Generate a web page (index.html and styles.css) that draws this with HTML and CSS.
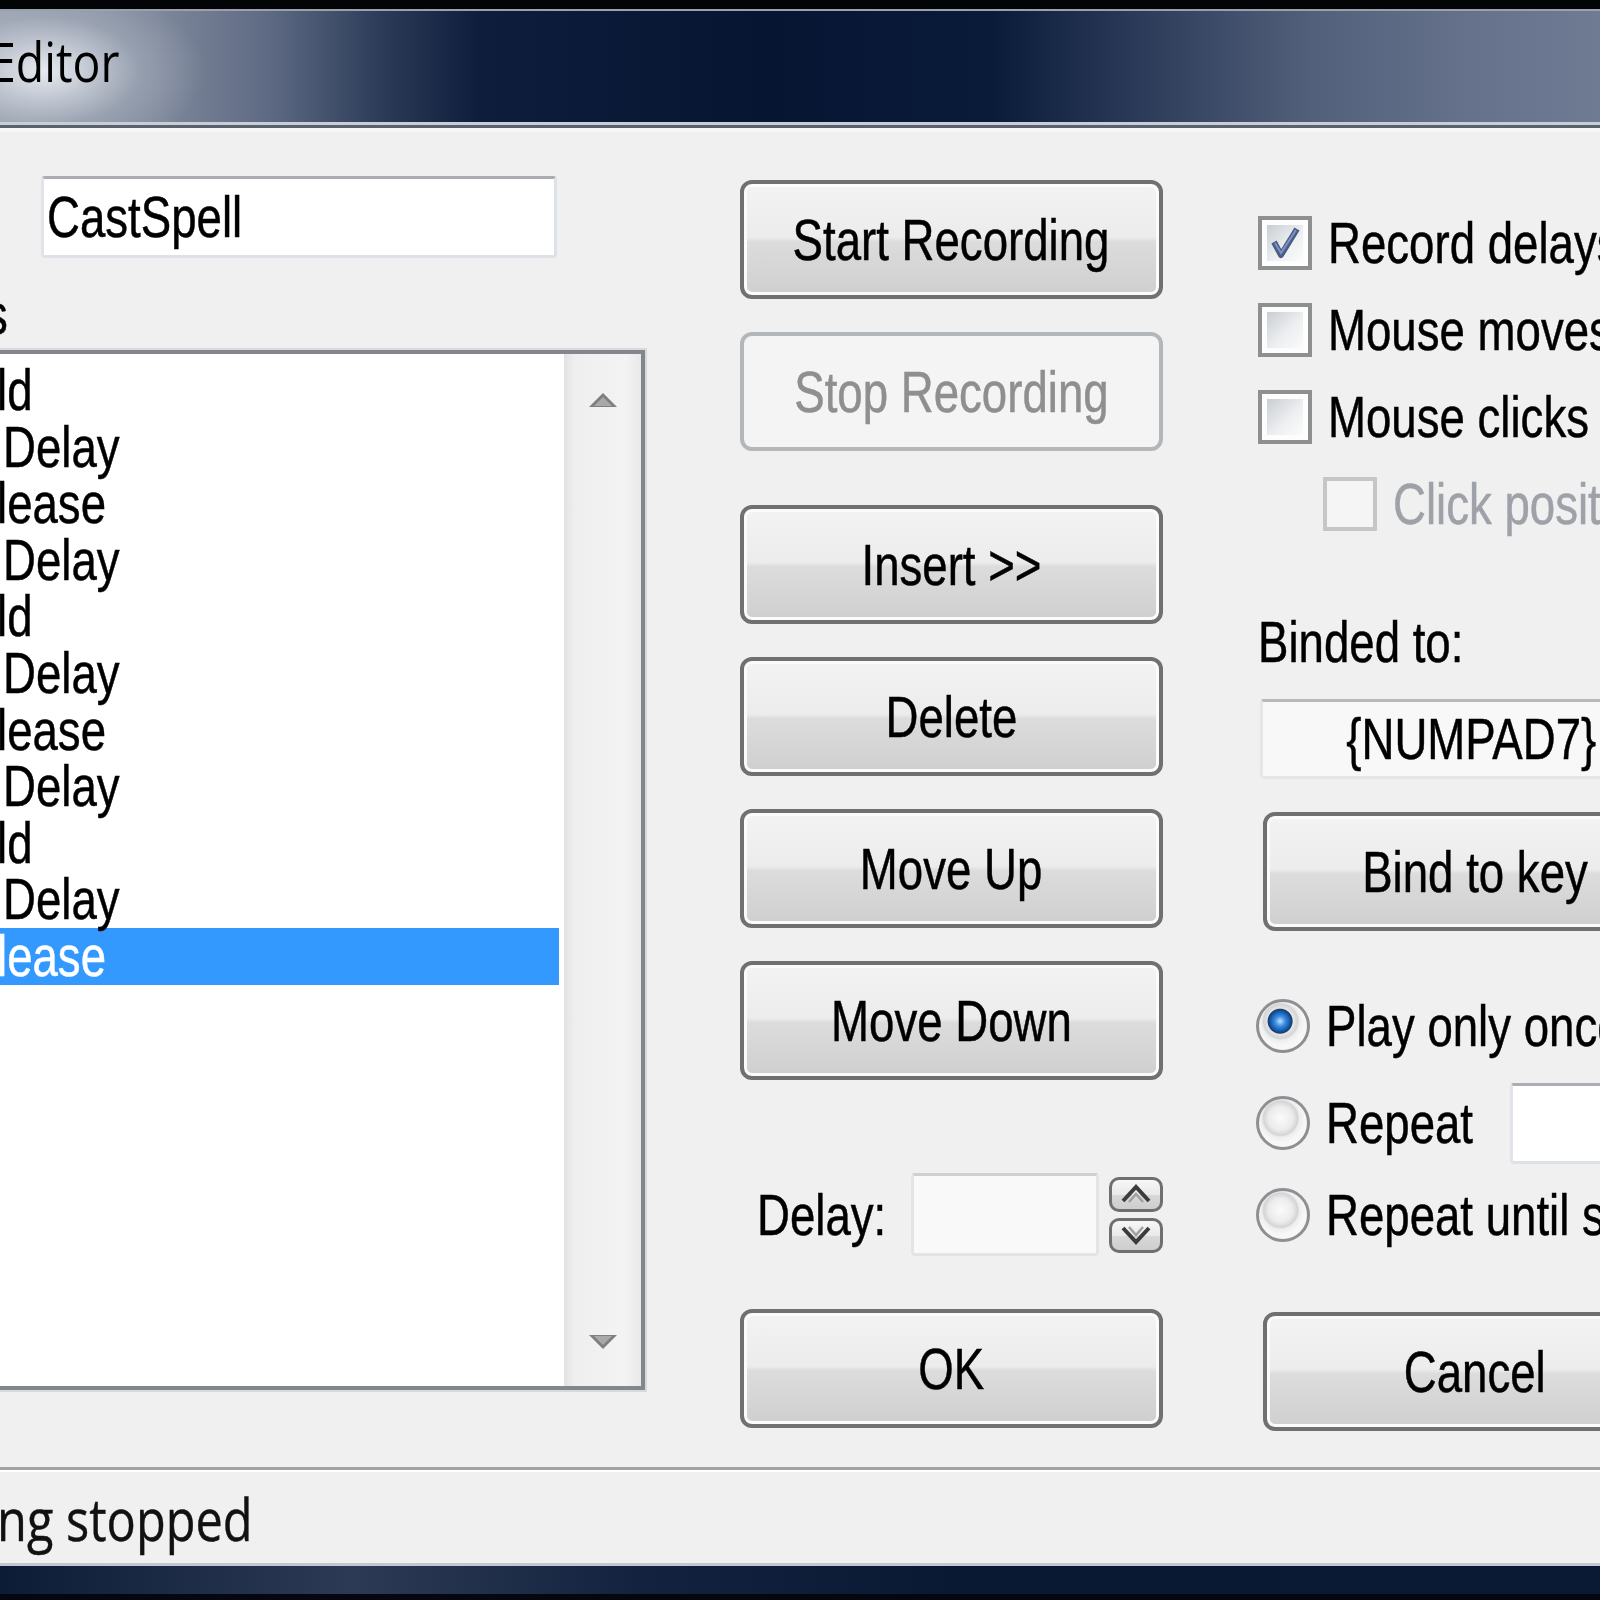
FILE: index.html
```html
<!DOCTYPE html>
<html lang="en">
<head>
    <meta charset="UTF-8">
    <title>Macro Editor</title>
    <link rel="stylesheet" href="styles.css">
</head>
<body>
<div class="window">
    <div class="titlebar"><span class="title">Editor</span></div>

    <div class="client">
        <div class="panes">
            <!-- left: name + steps list -->
            <div class="col-list">
                <div class="edit name-edit"><span class="txt">CastSpell</span></div>
                <div class="list-label"><span class="txt">s</span></div>
                <div class="listbox">
                    <div class="items">
                        <div class="item"><span class="txt cut">ld</span></div>
                        <div class="item"><span class="txt">Delay</span></div>
                        <div class="item"><span class="txt cut">lease</span></div>
                        <div class="item"><span class="txt">Delay</span></div>
                        <div class="item"><span class="txt cut">ld</span></div>
                        <div class="item"><span class="txt">Delay</span></div>
                        <div class="item"><span class="txt cut">lease</span></div>
                        <div class="item"><span class="txt">Delay</span></div>
                        <div class="item"><span class="txt cut">ld</span></div>
                        <div class="item"><span class="txt">Delay</span></div>
                        <div class="item selected"><span class="txt cut">lease</span></div>
                    </div>
                    <div class="scrollbar">
                        <svg width="30" height="16" viewBox="0 0 30 16"><polygon points="15,1 29,15 1,15" fill="#7f7f7f"/><polygon points="15,5 24,14 6,14" fill="#a9a9a9"/></svg>
                        <svg width="30" height="16" viewBox="0 0 30 16"><polygon points="1,1 29,1 15,15" fill="#7f7f7f"/><polygon points="6,2 24,2 15,11" fill="#a9a9a9"/></svg>
                    </div>
                </div>
            </div>

            <!-- middle: command buttons -->
            <div class="col-buttons">
                <div class="btn"><span class="txt">Start Recording</span></div>
                <div class="btn disabled"><span class="txt">Stop Recording</span></div>
                <div class="btn gap-lg"><span class="txt">Insert &gt;&gt;</span></div>
                <div class="btn"><span class="txt">Delete</span></div>
                <div class="btn"><span class="txt">Move Up</span></div>
                <div class="btn"><span class="txt">Move Down</span></div>

                <div class="delay-row">
                    <div class="delay-label"><span class="txt">Delay:</span></div>
                    <div class="edit delay-edit"></div>
                    <div class="spinner">
                        <div class="spin">
                            <svg width="38" height="20" viewBox="0 0 38 20"><polyline points="6,17 19,3 32,17" fill="none" stroke="#3c3c3c" stroke-width="4"/><polyline points="12,18 19,10 26,18" fill="none" stroke="#a0a0a0" stroke-width="2.5"/></svg>
                        </div>
                        <div class="spin">
                            <svg width="38" height="20" viewBox="0 0 38 20"><polyline points="6,3 19,17 32,3" fill="none" stroke="#3c3c3c" stroke-width="4"/><polyline points="12,2 19,10 26,2" fill="none" stroke="#a0a0a0" stroke-width="2.5"/></svg>
                        </div>
                    </div>
                </div>

                <div class="btn ok-btn"><span class="txt">OK</span></div>
            </div>

            <!-- right: options -->
            <div class="col-options">
                <div class="opt">
                    <div class="check checked">
                        <svg width="36" height="36" viewBox="0 0 36 36"><polyline points="7,17 14,30 30,4" fill="none" stroke="#4a5d86" stroke-width="6" stroke-linejoin="round"/><polyline points="8,18 14,28 29,5" fill="none" stroke="#7f93c4" stroke-width="2"/></svg>
                    </div>
                    <span class="txt">Record delays</span>
                </div>
                <div class="opt">
                    <div class="check"></div>
                    <span class="txt">Mouse moves</span>
                </div>
                <div class="opt">
                    <div class="check"></div>
                    <span class="txt">Mouse clicks</span>
                </div>
                <div class="opt sub disabled">
                    <div class="check"></div>
                    <span class="txt">Click position</span>
                </div>

                <div class="bind-label"><span class="txt">Binded to:</span></div>
                <div class="edit readonly key-edit"><span class="txt">{NUMPAD7}</span></div>
                <div class="btn bind-btn"><span class="txt">Bind to key</span></div>

                <div class="opt radio-row first">
                    <div class="radio on"></div>
                    <span class="txt">Play only once</span>
                </div>
                <div class="opt radio-row second">
                    <div class="radio"></div>
                    <span class="txt repeat-label">Repeat</span>
                    <div class="edit repeat-edit"></div>
                </div>
                <div class="opt radio-row third">
                    <div class="radio"></div>
                    <span class="txt">Repeat until stopped</span>
                </div>

                <div class="btn cancel-btn"><span class="txt">Cancel</span></div>
            </div>
        </div>

        <div class="statusbar"><span class="status-text">ng stopped</span></div>
    </div>

    <div class="frame-bottom"></div>
</div>
</body>
</html>
```

FILE: styles.css
```css
* {
    box-sizing: border-box;
}

body {
    margin: 0;
    background: #f0f0f0;
    overflow: hidden;
    font-family: "Liberation Sans", Arial, sans-serif;
    font-size: 57px;
    color: #000;
}

.window {
    width: 1600px;
    height: 1600px;
    display: flex;
    flex-direction: column;
    overflow: hidden;
}

/* caption bar */
.titlebar {
    flex: none;
    height: 132px;
    padding-top: 20px;
    border-top: 9px solid #030405;
    border-bottom: 4px solid #f6f6f6;
    background:
        radial-gradient(ellipse 160px 90px at 45px 62px, rgba(235, 238, 243, 0.95), rgba(170, 178, 192, 0.5) 60%, rgba(0, 0, 0, 0) 100%),
        linear-gradient(90deg, #9aa2b0 0, #7d879a 10%, #5d6983 17%, #2a3a57 24%, #0d1d3b 30%, #061532 48%, #0a1b3a 62%, #2b3a58 71%, #52607b 82%, #66728c 92%, #6f7b93 100%);
    box-shadow: inset 0 -3px 0 #59606e, inset 0 -6px 0 #c9ced6, inset 0 2px 0 #9aa1ad;
    white-space: nowrap;
}

.title {
    display: inline-block;
    margin-left: -10px;
    font-family: "Open Sans", "Noto Sans", sans-serif;
    font-size: 54px;
    line-height: 54px;
    color: #000;
    transform: scaleX(0.86);
    transform-origin: left center;
}

.client {
    flex: 1;
    display: flex;
    flex-direction: column;
}

.panes {
    height: 1335px;
    flex: none;
    display: grid;
    grid-template-columns: 645px 423px 430px;
    column-gap: 95px;
}

/* squeezed text, the old dialog font is narrower than Arial */
.txt {
    display: inline-block;
    white-space: nowrap;
    -webkit-text-stroke: 0.5px currentColor;
    transform: scaleX(0.8);
    transform-origin: left center;
}

/* left column */
.col-list {
    display: flex;
    flex-direction: column;
}

.edit {
    background: #fff;
    border: 3px solid #dde2e8;
    border-top-color: #abadb3;
    border-left-color: #e2e3ea;
    border-radius: 4px;
    display: flex;
    align-items: center;
}

.name-edit {
    margin: 44px 0 0 41px;
    width: 516px;
    height: 82px;
    padding-left: 3px;
}

.list-label {
    margin-top: 25px;
    margin-left: -15px;
    height: 62px;
    line-height: 62px;
}

.listbox {
    margin-top: 5px;
    width: 645px;
    height: 1040px;
    display: flex;
    background: #fff;
    border: 4px solid #82868d;
    border-left: none;
    outline: 2px solid #d9d9d9;
}

.items {
    flex: 1;
    padding-top: 8px;
}

.item {
    height: 56.6px;
    line-height: 56.6px;
    margin-right: 5px;
    padding-left: 3px;
}

.item .cut {
    margin-left: -6px;
}

.item.selected {
    background: #3399ff;
    color: #fff;
}

.scrollbar {
    width: 77px;
    display: flex;
    flex-direction: column;
    justify-content: space-between;
    align-items: center;
    padding: 38px 0 36px;
    background: linear-gradient(90deg, #e2e2e2 0, #efefef 14%, #f3f3f3 80%, #e9e9e9 100%);
}

/* middle column */
.col-buttons {
    display: flex;
    flex-direction: column;
    padding-top: 48px;
}

.btn {
    height: 119px;
    flex: none;
    display: flex;
    align-items: center;
    justify-content: center;
    border: 4px solid #707070;
    border-radius: 12px;
    background: linear-gradient(#f3f3f3 0, #ececec 48%, #dcdcdc 52%, #cfcfcf 100%);
    box-shadow: inset 0 0 0 3px #fbfbfb;
}

.btn .txt {
    transform-origin: center;
}

.btn + .btn {
    margin-top: 33px;
}

.btn.gap-lg {
    margin-top: 54px;
}

.btn.disabled {
    border-color: #b3b7ba;
    background: #f4f4f4;
    box-shadow: none;
    color: #8f8f8f;
}

.delay-row {
    margin-top: 93px;
    height: 83px;
    display: flex;
    align-items: center;
}

.delay-label {
    width: 154px;
    margin-left: 17px;
    flex: none;
}

.delay-edit {
    width: 188px;
    height: 83px;
    background: #f9f9f9;
    border-color: #e4e4e4;
    border-top-color: #d0d0d0;
}

.spinner {
    margin-left: 10px;
    width: 54px;
    display: flex;
    flex-direction: column;
    gap: 6px;
}

.spin {
    height: 35px;
    display: flex;
    align-items: center;
    justify-content: center;
    border: 3px solid #6f6f6f;
    border-radius: 10px;
    background: linear-gradient(#f7f7f7, #e9e9e9 50%, #d8d8d8 52%, #cecece);
}

.ok-btn {
    margin-top: 53px;
}

/* right column */
.col-options {
    display: flex;
    flex-direction: column;
    padding-top: 80px;
}

.opt {
    height: 62px;
    flex: none;
    display: flex;
    align-items: center;
}

.opt + .opt {
    margin-top: 25px;
}

.opt.sub {
    margin-left: 65px;
}

.opt.disabled {
    color: #9ea2a8;
}

.check {
    width: 54px;
    height: 54px;
    flex: none;
    margin-right: 16px;
    padding: 5px;
    border: 4px solid #8e8f8f;
    background: linear-gradient(135deg, #c9cdd3 0, #eceef0 55%, #fbfbfb 100%) content-box, #fdfdfd;
}

.check svg {
    display: block;
}

.opt.disabled .check {
    border-color: #c6c6c6;
    background: #f5f5f5;
}

.bind-label {
    margin-top: 76px;
    height: 62px;
    line-height: 62px;
}

.key-edit {
    margin: 26px 0 0 2px;
    width: 423px;
    height: 80px;
    justify-content: center;
    background: #f8f8f8;
    border-color: #e6e6e6;
    border-top-color: #b9b9b9;
}

.key-edit .txt {
    transform-origin: center;
}

.bind-btn,
.cancel-btn {
    width: 423px;
    margin-left: 5px;
}

.bind-btn {
    margin-top: 33px;
}

.radio-row.first {
    margin-top: 64px;
}

.radio-row.second {
    margin-top: 35px;
}

.radio-row.third {
    margin-top: 30px;
}

.radio {
    width: 54px;
    height: 54px;
    flex: none;
    margin: 0 16px 0 -2px;
    border-radius: 50%;
    border: 3px solid #8d8f92;
    background: radial-gradient(circle at 45% 40%, #fbfbfb 0, #ececec 12px, #d3d4d6 17px, #eeeeee 19px, #f7f7f7 24px);
}

.radio.on {
    background:
        radial-gradient(circle at 44% 40%, #bfe2ff 0, #3d8fe0 5px, #0f56a8 10px, #1f3b63 12px, rgba(0, 0, 0, 0) 13px),
        radial-gradient(circle at 45% 40%, #fbfbfb 0, #ececec 12px, #d3d4d6 17px, #eeeeee 19px, #f7f7f7 24px);
}

.repeat-label {
    width: 193px;
}

.repeat-edit {
    width: 200px;
    height: 81px;
    flex: none;
}

.cancel-btn {
    margin-top: 66px;
}

/* status strip */
.statusbar {
    flex: 1;
    border-top: 3px solid #a3a3a3;
    box-shadow: inset 0 2px 0 #ffffff;
    padding-top: 5px;
    white-space: nowrap;
}

.status-text {
    display: inline-block;
    margin-left: -3px;
    font-family: "Open Sans", "Noto Sans", sans-serif;
    font-size: 58px;
    line-height: 88px;
    color: #111;
    -webkit-text-stroke: 0.4px currentColor;
    transform: scaleX(0.84);
    transform-origin: left center;
}

.frame-bottom {
    flex: none;
    height: 37px;
    border-top: 3px solid #c2c8d1;
    background: linear-gradient(90deg, #0c1b36 0, #2c3a55 22%, #13223e 40%, #091833 60%, #0a1934 100%);
    box-shadow: inset 0 -6px 0 #04070d;
}
```
